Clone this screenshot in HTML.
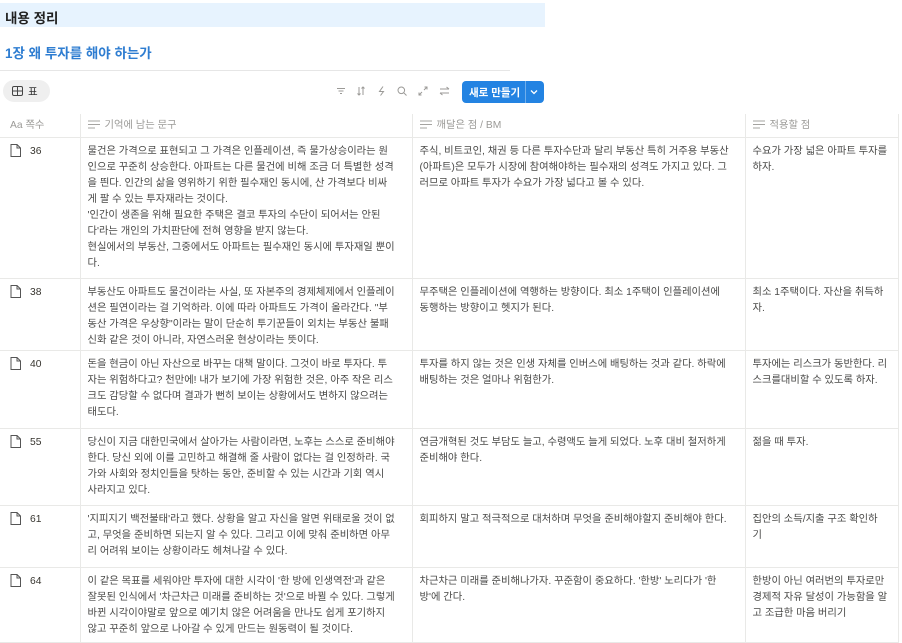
<!DOCTYPE html>
<html><head><meta charset="utf-8"><style>
*{margin:0;padding:0;box-sizing:border-box}
body{width:902px;height:643px;overflow:hidden;background:#fff;font-family:"Liberation Sans","Noto Sans CJK KR",sans-serif;color:#37352f;position:relative}
.abs{position:absolute}
.title{left:0;top:3px;width:545px;height:24px;background:#e7f3fe;font-weight:bold;font-size:13.5px;padding:4px 5px;color:#222}
.h2{left:5px;top:42px;font-size:13.5px;font-weight:bold;color:#2e7dd1}
.rule{left:0;top:70px;width:510px;height:1px;background:#e6e6e6}
.tab{left:3px;top:80px;width:47px;height:22px;border-radius:11px;background:#efefef;font-size:10.5px;padding:4px 0 0 9px;color:#333}
.btn{left:462px;top:81px;width:82px;height:22px;border-radius:4px;background:#2383e2;color:#fff;font-size:10.5px;font-weight:bold;padding:4px 0 0 7px}
.btn .sep{position:absolute;left:63px;top:0;width:1px;height:22px;background:rgba(255,255,255,.35)}
.tb{top:86px}
table{position:absolute;left:0;top:114px;border-collapse:collapse;table-layout:fixed;width:898px;font-size:10.3px;line-height:16px;color:#4a4a48}
td{vertical-align:top;border-top:1px solid #e9e9e7;border-right:1px solid #e9e9e7;padding:6px 6px 0 7px;white-space:nowrap;overflow:hidden}
td:first-child{padding-left:10px;color:#37352f}
tr.hd td{border-top:none;height:23px;color:#9b9a97;padding-top:4px}
tr:last-child td{border-bottom:1px solid #e9e9e7}
.doc{display:inline-block;vertical-align:-3px;margin-right:9px}
.li{display:inline-block;vertical-align:-1px;margin-right:5px}
</style></head><body>
<div class="abs title">내용 정리</div>
<div class="abs h2">1장 왜 투자를 해야 하는가</div>
<div class="abs rule"></div>
<div class="abs tab"><svg width="11" height="10" style="vertical-align:-1px;margin-right:5px"><rect x="0.5" y="0.5" width="10" height="9" rx="1.5" fill="none" stroke="#444"/><line x1="0" y1="5" x2="11" y2="5" stroke="#444"/><line x1="5.5" y1="0" x2="5.5" y2="10" stroke="#444"/></svg>표</div>
<svg class="abs tb" style="left:336px" width="10" height="10"><path d="M1 2.5h8M2.5 5h5M4 7.5h2" stroke="#9b9a97" stroke-width="1"/></svg>
<svg class="abs tb" style="left:356px" width="10" height="10"><path d="M3 1v8M1.5 7.5L3 9l1.5-1.5M7 9V1M5.5 2.5L7 1l1.5 1.5" stroke="#9b9a97" fill="none"/></svg>
<svg class="abs tb" style="left:377px" width="10" height="10"><path d="M6 .5L2.5 5.5h4L3.5 9.5" stroke="#9b9a97" fill="none"/></svg>
<svg class="abs tb" style="left:397px" width="10" height="10"><circle cx="4.3" cy="4.3" r="3.3" stroke="#9b9a97" fill="none"/><path d="M6.8 6.8L9.5 9.5" stroke="#9b9a97"/></svg>
<svg class="abs tb" style="left:418px" width="10" height="10"><path d="M1 9L4 6M1 6.5V9h2.5M9 1L6 4M6.5 1H9v2.5" stroke="#9b9a97" fill="none"/></svg>
<svg class="abs tb" style="left:439px" width="11" height="10"><path d="M1 3h9M7.5 1L10 3M10 7H1M3.5 9L1 7" stroke="#9b9a97" fill="none"/></svg>
<div class="abs btn">새로 만들기<span class="sep"></span><svg style="position:absolute;left:68px;top:8px" width="8" height="6"><path d="M1 1.5l3 3 3-3" stroke="#fff" stroke-width="1.3" fill="none"/></svg></div>
<table>
<colgroup><col style="width:80px"><col style="width:332px"><col style="width:333px"><col style="width:153px"></colgroup>
<tr class="hd"><td>Aa 쪽수</td><td><svg class="li" width="12" height="9"><path d="M0 1h12M0 4.5h12M0 8h7" stroke="#a5a4a1"/></svg>기억에 남는 문구</td><td><svg class="li" width="12" height="9"><path d="M0 1h12M0 4.5h12M0 8h7" stroke="#a5a4a1"/></svg>깨달은 점 / BM</td><td><svg class="li" width="12" height="9"><path d="M0 1h12M0 4.5h12M0 8h7" stroke="#a5a4a1"/></svg>적용할 점</td></tr>
<tr style="height:141px"><td><svg class="doc" width="11" height="13"><path d="M1 .5h6l3.5 3.5v8.5h-9.5z M7 .5v3.5h3.5" fill="none" stroke="#555"/></svg>36</td><td>물건은 가격으로 표현되고 그 가격은 인플레이션, 즉 물가상승이라는 원<br>인으로 꾸준히 상승한다. 아파트는 다른 물건에 비해 조금 더 특별한 성격<br>을 띈다. 인간의 삶을 영위하기 위한 필수재인 동시에, 산 가격보다 비싸<br>게 팔 수 있는 투자재라는 것이다.<br>'인간이 생존을 위해 필요한 주택은 결코 투자의 수단이 되어서는 안된<br>다'라는 개인의 가치판단에 전혀 영향을 받지 않는다.<br>현실에서의 부동산, 그중에서도 아파트는 필수재인 동시에 투자재일 뿐이<br>다.</td><td>주식, 비트코인, 채권 등 다른 투자수단과 달리 부동산 특히 거주용 부동산<br>(아파트)은 모두가 시장에 참여해야하는 필수재의 성격도 가지고 있다. 그<br>러므로 아파트 투자가 수요가 가장 넓다고 볼 수 있다.</td><td>수요가 가장 넓은 아파트 투자를<br>하자.</td></tr>
<tr style="height:72px"><td><svg class="doc" width="11" height="13"><path d="M1 .5h6l3.5 3.5v8.5h-9.5z M7 .5v3.5h3.5" fill="none" stroke="#555"/></svg>38</td><td>부동산도 아파트도 물건이라는 사실, 또 자본주의 경제체제에서 인플레이<br>션은 필연이라는 걸 기억하라. 이에 따라 아파트도 가격이 올라간다. "부<br>동산 가격은 우상향"이라는 말이 단순히 투기꾼들이 외치는 부동산 불패<br>신화 같은 것이 아니라, 자연스러운 현상이라는 뜻이다.</td><td>무주택은 인플레이션에 역행하는 방향이다. 최소 1주택이 인플레이션에<br>동행하는 방향이고 헷지가 된다.</td><td>최소 1주택이다. 자산을 취득하<br>자.</td></tr>
<tr style="height:78px"><td><svg class="doc" width="11" height="13"><path d="M1 .5h6l3.5 3.5v8.5h-9.5z M7 .5v3.5h3.5" fill="none" stroke="#555"/></svg>40</td><td>돈을 현금이 아닌 자산으로 바꾸는 대책 말이다. 그것이 바로 투자다. 투<br>자는 위험하다고? 천만에! 내가 보기에 가장 위험한 것은, 아주 작은 리스<br>크도 감당할 수 없다며 결과가 뻔히 보이는 상황에서도 변하지 않으려는<br>태도다.</td><td>투자를 하지 않는 것은 인생 자체를 인버스에 배팅하는 것과 같다. 하락에<br>배팅하는 것은 얼마나 위험한가.</td><td>투자에는 리스크가 동반한다. 리<br>스크를대비할 수 있도록 하자.</td></tr>
<tr style="height:77px"><td><svg class="doc" width="11" height="13"><path d="M1 .5h6l3.5 3.5v8.5h-9.5z M7 .5v3.5h3.5" fill="none" stroke="#555"/></svg>55</td><td>당신이 지금 대한민국에서 살아가는 사람이라면, 노후는 스스로 준비해야<br>한다. 당신 외에 이를 고민하고 해결해 줄 사람이 없다는 걸 인정하라. 국<br>가와 사회와 정치인들을 탓하는 동안, 준비할 수 있는 시간과 기회 역시<br>사라지고 있다.</td><td>연금개혁된 것도 부담도 늘고, 수령액도 늘게 되었다. 노후 대비 철저하게<br>준비해야 한다.</td><td>젊을 때 투자.</td></tr>
<tr style="height:62px"><td><svg class="doc" width="11" height="13"><path d="M1 .5h6l3.5 3.5v8.5h-9.5z M7 .5v3.5h3.5" fill="none" stroke="#555"/></svg>61</td><td>'지피지기 백전불태'라고 했다. 상황을 알고 자신을 알면 위태로울 것이 없<br>고, 무엇을 준비하면 되는지 알 수 있다. 그리고 이에 맞춰 준비하면 아무<br>리 어려워 보이는 상황이라도 헤쳐나갈 수 있다.</td><td>회피하지 말고 적극적으로 대처하며 무엇을 준비해야할지 준비해야 한다.</td><td>집안의 소득/지출 구조 확인하<br>기</td></tr>
<tr style="height:75px"><td><svg class="doc" width="11" height="13"><path d="M1 .5h6l3.5 3.5v8.5h-9.5z M7 .5v3.5h3.5" fill="none" stroke="#555"/></svg>64</td><td>이 같은 목표를 세워야만 투자에 대한 시각이 '한 방에 인생역전'과 같은<br>잘못된 인식에서 '차근차근 미래를 준비하는 것'으로 바뀔 수 있다. 그렇게<br>바뀐 시각이야말로 앞으로 예기치 않은 어려움을 만나도 쉽게 포기하지<br>않고 꾸준히 앞으로 나아갈 수 있게 만드는 원동력이 될 것이다.</td><td>차근차근 미래를 준비해나가자. 꾸준함이 중요하다. '한방' 노리다가 '한<br>방'에 간다.</td><td>한방이 아닌 여러번의 투자로만<br>경제적 자유 달성이 가능함을 알<br>고 조급한 마음 버리기</td></tr>
</table>
</body></html>
